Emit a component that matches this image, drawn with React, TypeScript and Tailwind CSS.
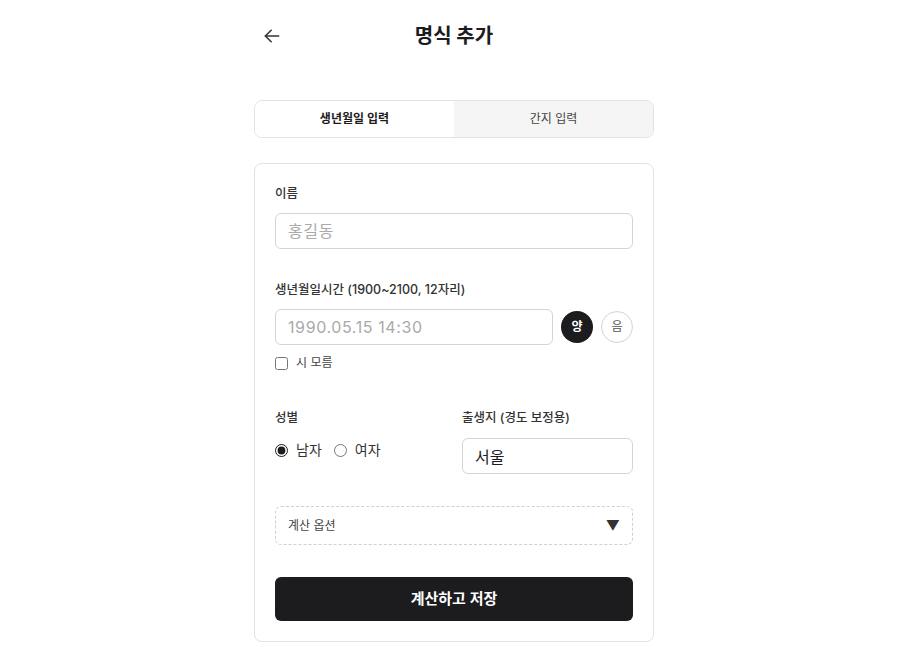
import { useState } from "react";

const font = { fontFamily: '"Inter", "Noto Sans CJK KR", sans-serif' };

function BackArrow() {
  return (
    <svg width="20" height="20" viewBox="0 0 24 24" fill="none" stroke="#333" strokeWidth="1.8" strokeLinecap="round" strokeLinejoin="round">
      <path d="M20 12H4" />
      <path d="M11 5l-7 7 7 7" />
    </svg>
  );
}

export default function App() {
  const [tab, setTab] = useState<"birth" | "ganji">("birth");
  const [calendar, setCalendar] = useState<"solar" | "lunar">("solar");
  const [gender, setGender] = useState<"male" | "female">("male");

  return (
    <div className="flex min-h-screen justify-center bg-white pr-[11px] text-[#1c1b1d]" style={font}>
      <div className="w-[400px] pb-3">
        {/* Header */}
        <header className="relative flex h-[72px] items-center px-2">
          <button className="flex h-5 w-5 items-center justify-center">
            <BackArrow />
          </button>
          <h1 className="absolute left-1/2 -translate-x-1/2 text-[20px] font-bold">명식 추가</h1>
        </header>

        {/* Tabs */}
        <div className="mt-[28px] grid h-[38px] grid-cols-2 overflow-hidden rounded-lg border border-[#e2e2e2]">
          <button
            onClick={() => setTab("birth")}
            className={`text-[12px] ${tab === "birth" ? "bg-white font-semibold text-[#1c1b1d]" : "bg-[#f5f5f5] text-[#444]"}`}
          >
            생년월일 입력
          </button>
          <button
            onClick={() => setTab("ganji")}
            className={`text-[12px] ${tab === "ganji" ? "bg-white font-semibold text-[#1c1b1d]" : "bg-[#f5f5f5] text-[#444]"}`}
          >
            간지 입력
          </button>
        </div>

        {/* Form card */}
        <div className="mt-[25px] rounded-lg border border-[#e2e2e2] px-5 pb-5 pt-5">
          <label className="block text-[12.5px] font-medium leading-5 text-[#333]">이름</label>
          <input
            placeholder="홍길동"
            className="mt-[9px] h-[36px] w-full rounded-md border border-[#d4d4d4] px-3 text-[16px] tracking-[0.6px] outline-none placeholder:text-[#aaa]"
          />

          <label className="mt-[31px] block text-[12.5px] font-medium leading-5 text-[#333]">
            생년월일시간 (1900~2100, 12자리)
          </label>
          <div className="mt-[9px] flex items-center gap-2">
            <input
              placeholder="1990.05.15 14:30"
              className="h-[36px] min-w-0 flex-1 rounded-md border border-[#d4d4d4] px-3 text-[16px] tracking-[0.6px] outline-none placeholder:text-[#aaa]"
            />
            <button
              onClick={() => setCalendar("solar")}
              className={`h-8 w-8 rounded-full text-[12px] font-semibold ${calendar === "solar" ? "bg-[#1c1b1d] text-white" : "border border-[#d4d4d4] text-[#555]"}`}
            >
              양
            </button>
            <button
              onClick={() => setCalendar("lunar")}
              className={`h-8 w-8 rounded-full text-[12px] ${calendar === "lunar" ? "bg-[#1c1b1d] font-semibold text-white" : "border border-[#d4d4d4] text-[#555]"}`}
            >
              음
            </button>
          </div>
          <label className="mt-[9px] flex items-center gap-2 text-[12px] leading-[18px] text-[#444]">
            <input type="checkbox" className="m-0 h-[13px] w-[13px]" />
            시 모름
          </label>

          <div className="mt-[36px] grid grid-cols-2 gap-4">
            <div>
              <div className="text-[12.5px] font-medium leading-5 text-[#333]">성별</div>
              <div className="mt-[13px] flex items-center text-[14px] leading-[18px] text-[#333]">
                <label className="flex items-center gap-2">
                  <input
                    type="radio"
                    name="gender"
                    checked={gender === "male"}
                    onChange={() => setGender("male")}
                    className="m-0 h-[13px] w-[13px] accent-[#1c1b1d]"
                  />
                  남자
                </label>
                <label className="ml-[12px] flex items-center gap-2">
                  <input
                    type="radio"
                    name="gender"
                    checked={gender === "female"}
                    onChange={() => setGender("female")}
                    className="m-0 h-[13px] w-[13px] accent-[#1c1b1d]"
                  />
                  여자
                </label>
              </div>
            </div>
            <div>
              <div className="text-[12.5px] font-medium leading-5 text-[#333]">출생지 (경도 보정용)</div>
              <input
                defaultValue="서울"
                className="mt-[10px] h-[36px] w-full rounded-md border border-[#d4d4d4] px-3 text-[16px] text-[#1c1b1d] outline-none"
              />
            </div>
          </div>

          <div className="mt-[32px] flex h-[39px] items-center justify-between rounded-md border border-dashed border-[#d0d0d0] px-3">
            <span className="text-[12px] text-[#444]">계산 옵션</span>
            <span className="text-[14px] text-[#333]">▼</span>
          </div>

          <button className="mt-[32px] h-[44px] w-full rounded-md bg-[#1c1b1d] text-[15px] font-semibold text-white">
            계산하고 저장
          </button>
        </div>
      </div>
    </div>
  );
}
